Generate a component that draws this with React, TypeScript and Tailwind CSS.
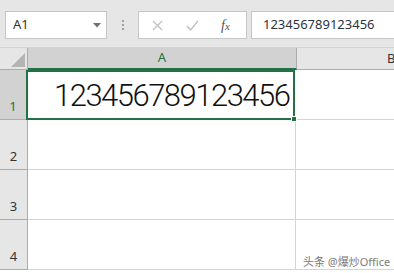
import React from "react";

const rows = [2, 3, 4];

export default function App() {
  return (
    <div className="relative w-[394px] h-[273px] overflow-hidden bg-white" style={{ fontFamily: '"Noto Sans", "Noto Sans CJK SC", sans-serif' }}>
      {/* Formula bar */}
      <div className="h-[48px] bg-[#e6e6e6] border-b border-[#d4d4d4] flex items-start pt-[11px]">
        <div className="shrink-0 ml-[5px] w-[102px] h-[28px] bg-white border border-[#c6c6c6] flex items-center justify-between pl-[7px] pr-[5px]">
          <span className="text-[13px] text-[#333]">A1</span>
          <svg width="8" height="5" viewBox="0 0 8 5"><path d="M0 0 L8 0 L4 4.5 Z" fill="#707070" /></svg>
        </div>
        <div className="shrink-0 ml-[14px] w-[3px] h-[28px] flex flex-col items-center justify-center gap-[2px]">
          <div className="w-[2px] h-[2px] bg-[#a0a0a0]" />
          <div className="w-[2px] h-[2px] bg-[#a0a0a0]" />
          <div className="w-[2px] h-[2px] bg-[#a0a0a0]" />
        </div>
        <div className="shrink-0 ml-[14px] w-[109px] h-[28px] bg-white border border-[#c6c6c6] flex items-center">
          <svg className="ml-[13px]" width="11" height="11" viewBox="0 0 11 11"><path d="M1 1 L10 10 M10 1 L1 10" stroke="#c0c0c0" strokeWidth="1.3" /></svg>
          <svg className="ml-[23px]" width="13" height="11" viewBox="0 0 13 11"><path d="M1 6 L4.5 10 L12 1" stroke="#c0c0c0" strokeWidth="1.4" fill="none" /></svg>
          <span className="ml-[22px] text-[14px] italic text-[#555]" style={{ fontFamily: '"Liberation Serif", serif' }}>f<span className="text-[11px]">x</span></span>
        </div>
        <div className="ml-[4px] flex-1 h-[28px] bg-white border border-[#c6c6c6] border-r-0 flex items-center pl-[11px]">
          <span className="text-[13px] text-[#2b3340]">123456789123456</span>
        </div>
      </div>
      {/* Column header row */}
      <div className="flex h-[22px]">
        <div className="shrink-0 w-[28px] bg-[#e6e6e6] border-r border-[#ababab] border-b border-b-[#ababab] relative">
          <svg className="absolute right-[2px] bottom-[2px]" width="14" height="14" viewBox="0 0 14 14"><path d="M14 0 L14 14 L0 14 Z" fill="#b4b4b4" /></svg>
        </div>
        <div className="shrink-0 w-[269px] bg-[#d2d2d2] border-r border-[#ababab] border-b-2 border-b-[#217346] flex items-center justify-center">
          <span className="text-[13px] text-[#217346]">A</span>
        </div>
        <div className="flex-1 min-w-0 bg-[#e6e6e6] border-b border-[#ababab] flex items-center pl-[90px]">
          <span className="text-[13px] text-[#333]">B</span>
        </div>
      </div>
      {/* Row 1 */}
      <div className="flex h-[50px]">
        <div className="shrink-0 w-[28px] bg-[#d2d2d2] border-r-2 border-[#217346] border-b border-b-[#ababab] flex items-end justify-center pb-[3px]">
          <span className="text-[13px] text-[#217346]">1</span>
        </div>
        <div className="shrink-0 relative w-[269px] -ml-[2px] border-2 border-[#217346] flex items-center pl-[26px]">
          <span className="text-[31px] font-light text-[#111] tracking-[-1.5px] leading-none" style={{ fontFamily: 'Roboto, sans-serif' }}>123456789123456</span>
          <div className="absolute -right-[4px] -bottom-[4px] w-[6px] h-[6px] bg-[#217346] border border-white" />
        </div>
        <div className="flex-1 border-b border-[#d4d4d4]" />
      </div>
      {rows.map((r) => (
        <div key={r} className="flex h-[50px]">
          <div className="shrink-0 w-[28px] bg-[#e6e6e6] border-r border-[#ababab] border-b border-b-[#ababab] flex items-end justify-center pb-[3px]">
            <span className="text-[13px] text-[#333]">{r}</span>
          </div>
          <div className="shrink-0 w-[268px] border-r border-[#d4d4d4] border-b border-b-[#d4d4d4]" />
          <div className="flex-1 border-b border-[#d4d4d4]" />
        </div>
      ))}
      <div className="absolute left-[303px] top-[254px] text-[11px] text-[#7a7a7a]">头条 @爆炒Office</div>
    </div>
  );
}
